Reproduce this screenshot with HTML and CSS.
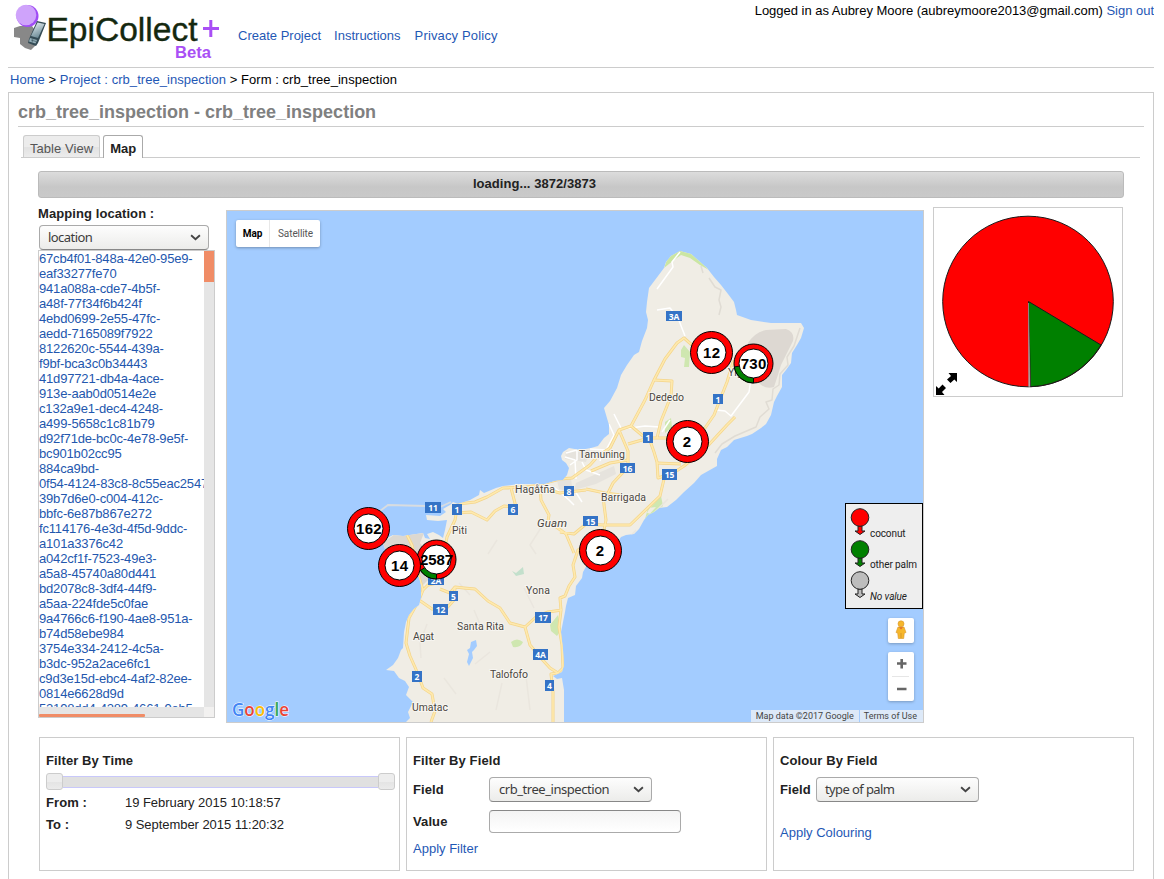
FILE: index.html
```html
<!DOCTYPE html>
<html lang="en">
<head>
<meta charset="utf-8">
<title>EpiCollect+ : crb_tree_inspection</title>
<link rel="stylesheet" href="styles.css">
</head>
<body>
<header class="header">
  <svg class="logo" width="216" height="66" viewBox="8 0 216 66">
    <defs>
      <linearGradient id="phone" x1="0" y1="0" x2="0.4" y2="1"><stop offset="0" stop-color="#eef6fa"/><stop offset="1" stop-color="#6f8d99"/></linearGradient>
    </defs>
    <path d="M14 28L20 26L32 26L38 34L35 46L31 50L25 48L20 44L20 38L14 37Z" fill="#888"/>
    <circle cx="27.500" cy="16" r="11" fill="#a04cf5"/>
    <circle cx="26" cy="15" r="10.300" fill="#cfa3fb"/>
    <path d="M37 21L46 23L38 43L36 46L28 43L29 39Z" fill="#344b55"/>
    <path d="M37.500 22.500L44.500 24L38 38L31 36Z" fill="url(#phone)"/>
    <path d="M30 38L37 40L35.500 43.500L29 41.500Z" fill="#93adb7"/>
    <path d="M31 40L36 41.500M33 38.500L32 42.500" stroke="#405a64" stroke-width=".7"/>
    <text class="logo-name" x="46.500" y="40.500" textLength="151" lengthAdjust="spacingAndGlyphs">EpiCollect</text>
    <path d="M203 28.500H219M210.800 20V37" stroke="#a94ff5" stroke-width="3"/>
    <text class="logo-beta" x="175" y="58" textLength="36" lengthAdjust="spacingAndGlyphs">Beta</text>
  </svg>
  <nav class="nav"><a>Create Project</a><a>Instructions</a><a>Privacy Policy</a></nav>
  <div class="login">Logged in as Aubrey Moore (aubreymoore2013@gmail.com) <a>Sign out</a></div>
</header>
<div class="crumbs"><a>Home</a> &gt; <a>Project : crb_tree_inspection</a> &gt; Form : crb_tree_inspection</div>
<main class="main">
  <h1 class="title">crb_tree_inspection - crb_tree_inspection</h1>
  <div class="tabs"><div class="tab">Table View</div><div class="tab active">Map</div></div>
  <div class="progress">loading... 3872/3873</div>
  <div class="workspace">
    <section class="side">
      <div class="label side-label">Mapping location :</div>
      <div class="select select-loc"><span>location</span><svg class="chev" viewBox="0 0 10 6"><path d="M1 1L5 4.600L9 1"/></svg></div>
      <div class="list">
        <div class="list-text">67cb4f01-848a-42e0-95e9-<br>eaf33277fe70<br>941a088a-cde7-4b5f-<br>a48f-77f34f6b424f<br>4ebd0699-2e55-47fc-<br>aedd-7165089f7922<br>8122620c-5544-439a-<br>f9bf-bca3c0b34443<br>41d97721-db4a-4ace-<br>913e-aab0d0514e2e<br>c132a9e1-dec4-4248-<br>a499-5658c1c81b79<br>d92f71de-bc0c-4e78-9e5f-<br>bc901b02cc95<br>884ca9bd-<br>0f54-4124-83c8-8c55eac2547<br>39b7d6e0-c004-412c-<br>bbfc-6e87b867e272<br>fc114176-4e3d-4f5d-9ddc-<br>a101a3376c42<br>a042cf1f-7523-49e3-<br>a5a8-45740a80d441<br>bd2078c8-3df4-44f9-<br>a5aa-224fde5c0fae<br>9a4766c6-f190-4ae8-951a-<br>b74d58ebe984<br>3754e334-2412-4c5a-<br>b3dc-952a2ace6fc1<br>c9d3e15d-ebc4-4af2-82ee-<br>0814e6628d9d<br>52198dd4-4289-4661-9eb5-</div>
        <div class="vbar"><div class="vthumb"></div></div>
        <div class="hbar"><div class="hthumb"></div></div>
        <div class="corner"></div>
      </div>
    </section>
    <section class="map">
      <svg class="map-art" width="696" height="511" viewBox="227 211 696 511">
        <defs>
          <clipPath id="clip-land"><use href="#land"/></clipPath>
        </defs>
        <path id="land" fill="#f0ede5" d="M680 251L691 254L707 268L714 277L721 285L728 294L734 302L736 310L737 315L751 320L771 323L782 323L801 323L804 328L801 338L797 345L792 353L791 363L786 370L782 375L782 387L777 396L774 402L771 415L766 424L761 428L752 434L747 436L734 440L727 447L721 450L717 459L717 466L701 475L694 483L684 492L676 500L667 507L659 508L654 512L648 515L644 520L639 529L634 534L626 535L621 537L612 550L600 557L587 565L583 572L582 578L576 586L575 595L568 598L566 606L565 612L563 622L561 632L563 650L564 665L562 672L553 676L557 679L562 678L564 690L564 722L406 722L410 718L408 712L413 702L406 695L409 687L405 681L399 678L394 671L386 670L393 665L398 658L401 650L403 648L404 632L406 622L409 615L414 609L419 605L421 598L421 585L419 577L412 570L398 562L386 552L383 543L387 538L393 535L403 536L423 533L425 538L430 539L427 534L433 532L439 535L443 538L445 530L447 520L438 521L427 520L426 515L440 516L446 512L443 509L450 505L453 502L458 504L470 500L479 495L480 490L484 493L496 488L503 486L519 484L545 484L555 481L563 480L567 475L569 468L566 463L562 460L561 456L563 452L569 448L580 450L591 448L598 446L604 438L609 434L609 425L604 408L610 401L617 388L621 375L627 365L634 355L639 352L642 341L647 328L648 320L646 312L647 302L649 288L655 280L664 268L666 262L671 256Z"/>
        <g clip-path="url(#clip-land)">
          <path fill="#cbe6a3" d="M664 268L668 257L680 249L693 254L709 270L700 265L690 258L681 255L674 260Z"/>
          <path fill="#ddd8d2" d="M748 343Q755 332 766 330L786 329Q795 332 793 341L781 365Q777 378 774 387Q765 390 758 382L748 370Z"/>
          <path fill="#dcd8d1" d="M383 543L395 534L424 533L420 543L433 558L433 575L423 585L412 570L386 554Z"/>
          <path fill="#e6e3dd" d="M566 451L590 450L586 462L565 459ZM576 483L614 466L616 474L596 484L574 490ZM557 480L571 479L573 493L559 489Z"/>
          <path fill="#cfe7b0" d="M681 350L684 345L690 352L689 367L684 367L685 358L681 357ZM665 422L671 418L672 427L665 433ZM649 509L661 496L663 506L652 514L647 513ZM550 625L558 615L561 630L557 636L551 631ZM511 642Q517 637 523 642Q521 648 513 647ZM645 519L656 507L648 508Z"/>
          <path fill="#c3e0cc" d="M512 571L516 573L523 567L524 574L516 576Z"/>
          <g fill="none" stroke="#e0dcd4" stroke-width="1.500" stroke-linejoin="round">
            <path d="M701 266L703 273M709 278L715 287L721 290L719 300L721 307L719 315M800 328L794 346L787 357L788 365L780 374L779 385L773 389L772 400L766 402L769 409L760 417L756 427L735 436L722 444L715 453"/>
            <path stroke="#eae6de" d="M497 540L488 554M546 520L530 545L536 554M459 583L470 595M427 624L420 643L421 658M490 652L475 664M444 678L456 694M474 610L482 629M524 588L534 608M526 676L530 710M496 710L502 683M668 499L655 512M636 530L620 548"/>
          </g>
          <g fill="none" stroke="#fff" stroke-width="1.500" stroke-linejoin="round">
            <path d="M680 252L672 262L673 267L657 289M657 310L670 308L678 318L685 336M614 414L621 428M716 410L725 411L731 416L734 412L749 392L751 379M623 429L645 426L660 427M609 424L614 435L606 450L590 449M565 457L575 460L576 479M566 453L577 450L577 460L570 465M582 462L586 470L600 475M541 485L555 488L569 500L574 505M575 491L582 502M603 451L600 461M662 432L670 420"/>
          </g>
          <g class="road-edge"><use href="#roads"/></g>
          <g class="road-fill"><g id="roads">
            <path d="M692 345L684 338L677 343L665 359L654 380L645 400L638 413L631 426L643 436L649 438L664 438L687 438L705 428L714 415L727 382L733 362L742 360"/>
            <path d="M654 380L672 381L671 396L661 421L657 438M631 426L619 430L610 448L598 456L590 465L572 478L560 479L541 484"/>
            <path d="M619 430L628 451L628 467L613 483L607 495M628 444L649 438L654 452L657 462L658 478L664 476M735 417L727 425L715 438L704 450L684 466L664 479L660 496L630 525L603 525L586 524"/>
            <path d="M628 460L610 463L591 471M586 489L605 493L621 495M603 492L604 505L606 520L604 530M657 463L681 464"/>
            <path d="M541 485L526 487L503 488L487 497L475 502L458 504L455 520L447 537L443 560M457 513L471 512L487 520L495 511L504 506L516 507L511 488M540 486L541 500L549 515L548 521L566 534L574 553M541 488L560 493L586 490M586 524L574 534L560 532M606 531L590 543L578 550L573 565L575 577L569 586L565 596L560 598L561 610L559 627L562 645L563 668L558 673L550 668L540 657L530 645L525 627L510 623L500 608L488 601L475 589L464 588L455 587L450 593L440 589M525 627L536 617L548 612L562 610M407 535L412 545L419 577L423 590L419 600L432 609L445 610L454 600L455 588M423 590L428 585L437 583"/>
            <path d="M419 600L409 618L406 643L410 656L418 674L423 688L432 694L435 711L431 722M558 673L551 674L553 692L553 722"/>
          </g></g>
          <path fill="#a3ccff" d="M471 642L476 640L477 646L474 650L472 652L473 658L469 666L467 662L469 654L467 650L470 648Z"/>
        </g>
        <path fill="none" stroke="#d8dce0" stroke-width="1.800" d="M380 511L388 505L426 506M440 507L451 502"/>
        <g class="shields">
          <path d="M666 311h16v10h-16zM713 394h10v10h-10zM643 432h10v11h-10zM620 463h15v10h-15zM662 469h15v11h-15zM583 516h15v10h-15zM564 486h10v10h-10zM508 504h10v11h-10zM452 504h10v11h-10zM425 502h16v11h-16zM428 575h16v10h-16zM449 591h9v10h-9zM433 604h15v11h-15zM535 612h16v11h-16zM533 649h15v11h-15zM412 671h10v11h-10zM545 680h9v11h-9z"/>
          <g class="shield-text">
            <text x="674" y="319.500">3A</text><text x="718" y="402.500">1</text><text x="648" y="441">1</text><text x="627.500" y="471.500">16</text><text x="669.500" y="478">15</text><text x="590.500" y="524.500">15</text><text x="569" y="494.500">8</text><text x="513" y="513">6</text><text x="457" y="513">1</text><text x="433" y="511">11</text><text x="436" y="583.500">2A</text><text x="453.500" y="599.500">5</text><text x="440.500" y="613">12</text><text x="543" y="621">17</text><text x="540.500" y="658">4A</text><text x="417" y="680">2</text><text x="549.500" y="689">4</text>
          </g>
        </g>
        <g class="places">
          <text x="649" y="401" textLength="35">Dededo</text><text x="728" y="376">Yigo</text>
          <text x="579" y="458" textLength="46">Tamuning</text><text x="601" y="501" textLength="45">Barrigada</text>
          <text x="515" y="493" textLength="40">Hagåtña</text><text x="537" y="526.500" textLength="30" class="region">Guam</text>
          <text x="452" y="534" textLength="15">Piti</text><text x="526" y="594" textLength="24">Yona</text>
          <text x="457" y="630" textLength="47">Santa Rita</text><text x="413" y="640" textLength="21">Agat</text>
          <text x="490" y="678" textLength="38">Talofofo</text><text x="412" y="711" textLength="36">Umatac</text>
        </g>
        <g class="cluster">
          <g><circle class="ring" cx="436.500" cy="559.500" r="19.500"/><path d="M436.500 559.500V579A19.500 19.500 0 0 1 420.500 570.500Z" fill="#008000" stroke="#000"/><circle class="hole" cx="436.500" cy="559.500" r="14.500"/><text x="436.500" y="565" textLength="33">2587</text></g>
          <g><circle class="ring" cx="368.500" cy="528.500" r="21"/><circle class="hole" cx="368.500" cy="528.500" r="14.500"/><text x="368.800" y="534" textLength="25.500">162</text></g>
          <g><circle class="ring" cx="399.500" cy="565.500" r="21"/><circle class="hole" cx="399.500" cy="565.500" r="14.500"/><text x="399.500" y="571" textLength="17">14</text></g>
          <g><circle class="ring" cx="711.500" cy="352.500" r="21"/><circle class="hole" cx="711.500" cy="352.500" r="14.500"/><text x="711.500" y="358" textLength="17">12</text></g>
          <g><circle class="ring" cx="753.500" cy="363.500" r="19.500"/><path d="M753.500 363.500V383A19.500 19.500 0 0 1 734.300 367Z" fill="#008000" stroke="#000"/><circle class="hole" cx="753.500" cy="363.500" r="14.500"/><text x="753.500" y="369" textLength="25.500">730</text></g>
          <g><circle class="ring" cx="687.500" cy="441.500" r="21"/><circle class="hole" cx="687.500" cy="441.500" r="14.500"/><text x="687" y="447">2</text></g>
          <g><circle class="ring" cx="600.500" cy="550.500" r="21"/><circle class="hole" cx="600.500" cy="550.500" r="14.500"/><text x="600" y="556">2</text></g>
        </g>
        <text class="google" x="232" y="716" textLength="57" lengthAdjust="spacingAndGlyphs"><tspan fill="#4285f4">G</tspan><tspan fill="#ea4335">o</tspan><tspan fill="#fbbc05">o</tspan><tspan fill="#4285f4">g</tspan><tspan fill="#34a853">l</tspan><tspan fill="#ea4335">e</tspan></text>
      </svg>
      <div class="map-type"><b>Map</b><span>Satellite</span></div>
      <div class="legend">
        <div class="legend-row"><svg class="pin pin-red" viewBox="0 0 20 28"><path d="M8 18h4v5h3l-5 3.500l-5-3.500h3z"/><circle cx="10" cy="9.500" r="8.800"/></svg><span>coconut</span></div>
        <div class="legend-row"><svg class="pin pin-green" viewBox="0 0 20 28"><path d="M8 18h4v5h3l-5 3.500l-5-3.500h3z"/><circle cx="10" cy="9.500" r="8.800"/></svg><span>other palm</span></div>
        <div class="legend-row"><svg class="pin pin-none" viewBox="0 0 20 28"><path d="M8 18h4v5h3l-5 3.500l-5-3.500h3z"/><circle cx="10" cy="9.500" r="8.800"/></svg><i>No value</i></div>
      </div>
      <div class="map-controls">
        <div class="ctl pegman"><svg width="12" height="20" viewBox="0 0 12 20"><g fill="#f6b72c" stroke="#d9962a" stroke-width=".6"><circle cx="6" cy="3.800" r="3"/><path d="M3 7H9L11 12.500L9.300 13L8.700 18.500H3.300L2.700 13L1 12.500Z"/></g><path d="M4 7.200H8L6 9.500Z" fill="#e26a2c"/><path d="M6 13V18" stroke="#c98a28" stroke-width=".7"/></svg></div>
        <div class="ctl zoom"><svg width="26" height="49" viewBox="0 0 26 49"><path d="M9 11.500H18.500M13.700 7V16.500M9 37H18.500" stroke="#666" stroke-width="2.600"/><path d="M4 24.500H21" stroke="#e6e6e6"/></svg></div>
      </div>
      <div class="credits"><span>Map data ©2017 Google</span><span class="terms">Terms of Use</span></div>
    </section>
    <section class="pie">
      <svg width="188" height="188" viewBox="934 208 188 188">
        <g stroke="#1a1a1a"><circle cx="1028" cy="301.500" r="85.300" fill="#f00"/>
        <path d="M1028.500 301.500L1101 345A85.300 85.300 0 0 1 1030.500 386.700Z" fill="#008000"/></g>
        <path d="M1028.500 303L1028.700 386.500H1030Z" fill="#bbb" stroke="#999" stroke-width=".6"/>
        <path d="M936 395V386L938.700 388.500L942.500 384.500L946 388L942 392L944.500 395ZM957 373V382L954.300 379.500L950.500 383L947 379.500L951 376L948.500 373Z" fill="#000"/>
      </svg>
    </section>
  </div>
  <div class="panels">
    <section class="panel">
      <div class="label">Filter By Time</div>
      <div class="slider"><div class="knob"></div><div class="track"></div><div class="knob"></div></div>
      <div class="time-row"><b>From :</b><span>19 February 2015 10:18:57</span></div>
      <div class="time-row"><b>To :</b><span>9 September 2015 11:20:32</span></div>
    </section>
    <section class="panel">
      <div class="label">Filter By Field</div>
      <div class="form-row"><b>Field</b><div class="select select-field"><span>crb_tree_inspection</span><svg class="chev" viewBox="0 0 10 6"><path d="M1 1L5 4.600L9 1"/></svg></div></div>
      <div class="form-row value-row"><b>Value</b><div class="input"></div></div>
      <a class="apply">Apply Filter</a>
    </section>
    <section class="panel">
      <div class="label">Colour By Field</div>
      <div class="form-row narrow"><b>Field</b><div class="select select-palm"><span>type of palm</span><svg class="chev" viewBox="0 0 10 6"><path d="M1 1L5 4.600L9 1"/></svg></div></div>
      <a class="apply colouring">Apply Colouring</a>
    </section>
  </div>
</main>
</body>
</html>
```
FILE: styles.css
```css
* { box-sizing: border-box; }
html { height: 879px; overflow: hidden; }
body { height: 879px; overflow: hidden; margin: 0 10px 0 8px; background: #fff; color: #000; font: 13px/15px "Liberation Sans", Arial, sans-serif; }
a { color: #1f58b5; text-decoration: none; }
b, .label { font-weight: bold; color: #222; letter-spacing: .1px; }

.header { display: flex; height: 68px; border-bottom: 1px solid #ccc; }
.logo { flex: none; display: block; }
.logo-name { font: 34px "Liberation Sans", sans-serif; fill: #14280f; stroke: #14280f; stroke-width: .4px; }
.logo-beta { font: bold 16.500px "Liberation Sans", sans-serif; fill: #a94ff5; }
.nav { display: flex; gap: 13px; padding: 28px 0 0 14px; }
.nav a:last-child { margin-left: 1px; letter-spacing: .15px; }
.login { margin-left: auto; padding-top: 3px; letter-spacing: -.02px; }
.crumbs { height: 24px; padding: 4px 2px 0; letter-spacing: .05px; }

.main { height: 800px; border: 1px solid #ccc; padding: 0 9px; color: #222; }
.title { height: 34px; margin: 0; padding-top: 9px; border-bottom: 1px solid #ccc; font-size: 18px; line-height: 20px; color: #808080; }
.tabs { display: flex; align-items: flex-end; gap: 3px; height: 31px; margin: 0 4px 0 3px; padding-left: 2px; border-bottom: 1px solid #ccc; }
.tab { height: 22px; padding: 5px 6px 0; border: 1px solid #ccc; border-bottom: 0; border-radius: 3px 3px 0 0; background: linear-gradient(#ececec 50%, #e2e2e2 55%, #ececec); color: #555; letter-spacing: .05px; }
.tab.active { margin-bottom: -1px; height: 23px; border-color: #aaa; background: #fff; color: #212121; font-weight: bold; }
.progress { height: 27px; margin: 13px 20px 0; padding-right: 93px; border: 1px solid #bbb; border-radius: 3px; background: linear-gradient(#dcdcdc, #c7c7c7 60%, #c9c9c9); line-height: 24px; text-align: center; font-weight: bold; letter-spacing: .05px; }

.workspace { display: flex; padding-left: 20px; height: 539px; }
.side { width: 177px; padding-top: 8px; }
.side-label { height: 19px; letter-spacing: .08px; }
.select { display: flex; align-items: center; justify-content: space-between; height: 25px; padding: 0 7px 2px 8px; border: 1px solid #aaa; border-bottom-color: #888; border-radius: 4px; background: linear-gradient(#fdfdfd, #ececea); color: #3c3c3c; font: 13px "Noto Sans", sans-serif; }
.select-loc { width: 170px; margin-left: 1px; letter-spacing: -.55px; }
.chev { width: 11px; height: 7px; margin-top: 2px; fill: none; stroke: #444; stroke-width: 1.700; }
.list { display: grid; grid-template: 456px 10px / 165px 10px; width: 177px; height: 468px; border: 1px solid #ccc; }
.list-text { overflow: hidden; white-space: nowrap; color: #2357ae; letter-spacing: -.17px; }
.vbar, .hbar { background: #e5e5e5; }
.vthumb { height: 31px; background: #f08c66; }
.hbar { padding-top: 7px; }
.hthumb { width: 106px; height: 3px; background: #f08c66; border-radius: 1px; }
.corner { background: #f2f1f0; }

.map { position: relative; flex: none; width: 698px; height: 513px; margin: 12px 0 0 11px; border: 1px solid #ccc; background: #a3ccff; overflow: hidden; }
.map-art { display: block; }
.road-edge { fill: none; stroke: #f4d58a; stroke-width: 3; stroke-linejoin: round; }
.road-fill { fill: none; stroke: #fee9ae; stroke-width: 1.600; stroke-linejoin: round; }
.shields { fill: #3473c6; }
.shield-text { fill: #fff; font: bold 8.500px "Open Sans", sans-serif; text-anchor: middle; }
.places { fill: #4a4540; stroke: #f7f5f0; stroke-width: 2px; paint-order: stroke; font: 10.500px Roboto, sans-serif; }
.region { font-style: italic; font-size: 11.500px; }
.cluster { text-anchor: middle; font: bold 15px "Liberation Sans", sans-serif; }
.ring { fill: #f00; stroke: #000; }
.hole { fill: #fff; stroke: #000; }
.google { font: 600 18.500px "Open Sans", sans-serif; stroke: #fff; stroke-width: 1px; paint-order: stroke; }
.map-type { position: absolute; left: 9px; top: 9px; display: flex; height: 27px; background: #fff; border-radius: 2px; box-shadow: 0 1px 3px rgba(0,0,0,.3); font: 10px/27px Roboto, sans-serif; color: #565656; }
.map-type b { width: 34px; text-align: center; color: #000; font-weight: 700; letter-spacing: 0; border-right: 1px solid #e8e8e8; }
.map-type span { width: 50px; padding-left: 1px; text-align: center; letter-spacing: -.1px; }
.legend { position: absolute; right: 0; top: 292px; width: 78px; height: 106px; padding: 4px 0 0 4px; border: 1px solid #000; background: #eee; font: 10px/12px Roboto, sans-serif; color: #222; letter-spacing: -.1px; }
.legend-row { display: flex; align-items: flex-end; height: 31.500px; white-space: nowrap; }
.pin { width: 20px; height: 28px; margin-bottom: 3.500px; stroke: #222; stroke-width: 1; }
.pin-red { fill: #f00; }
.pin-green { fill: #008000; }
.pin-none { fill: #bdbdbd; }
.map-controls { position: absolute; right: 9px; top: 407px; display: flex; flex-direction: column; gap: 9px; }
.ctl { width: 26px; background: #fff; border-radius: 2px; box-shadow: 0 1px 3px rgba(0,0,0,.25); }
.ctl svg { display: block; }
.pegman { display: flex; justify-content: center; padding-top: 2px; height: 25px; }
.zoom { height: 49px; }
.credits { position: absolute; right: 0; bottom: 0; display: flex; gap: 1px; font: 9px/12px Roboto, sans-serif; color: #444; white-space: nowrap; }
.credits span { padding: 0 5px; background: rgba(245,245,245,.7); }
.credits .terms { padding: 0 6px 0 4px; }

.pie { flex: none; width: 190px; height: 190px; margin: 9px 0 0 9px; border: 1px solid #ccc; }
.pie svg { display: block; }

.panels { display: flex; gap: 6px; padding-left: 21px; }
.panel { width: 361px; height: 134px; padding: 15px 4px 0 6px; border: 1px solid #ccc; }
.slider { display: flex; align-items: center; height: 17px; margin-top: 5px; }
.knob { flex: none; width: 17px; height: 17px; border: 1px solid #ccc; border-radius: 3px; background: linear-gradient(#ededed 50%, #e4e4e4 55%, #ebebeb); }
.track { flex: 1; height: 12px; border: solid #c8c8fa; border-width: 1px 0; background: #e0e0e0; }
.time-row { display: flex; height: 22px; padding-top: 5px; letter-spacing: -.05px; }
.time-row b { width: 79px; }
.form-row { display: flex; align-items: center; height: 25px; margin-top: 9px; }
.form-row b { width: 76px; }
.form-row.narrow b { width: 36px; }
.select-field { width: 163px; padding-left: 9px; letter-spacing: -.45px; }
.select-palm { width: 163px; letter-spacing: -.6px; }
.value-row { margin-top: 7px; }
.input { width: 192px; height: 23px; border: 1px solid #aaa; border-top-color: #888; border-radius: 4px; background: linear-gradient(#f4f4f4, #fff); }
.apply { display: block; margin-top: 7px; }
.colouring { margin-top: 23px; }
```
